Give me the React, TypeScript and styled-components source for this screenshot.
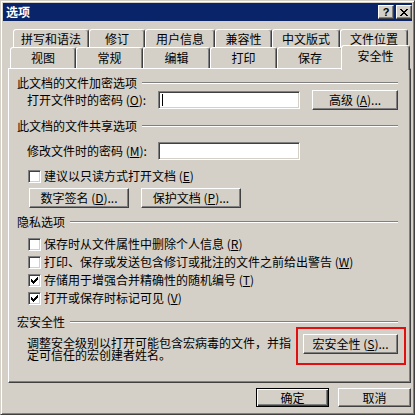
import React from "react";
import styled, { createGlobalStyle, css } from "styled-components";

const FACE = "#d4d0c8";

const GlobalStyle = createGlobalStyle`
  html, body { margin: 0; padding: 0; background: ${FACE}; }
  body {
    font-family: "Noto Sans CJK SC", "Noto Sans", sans-serif;
    font-size: 12px;
    color: #000;
  }
  *, *::before, *::after { box-sizing: border-box; }
`;

const raised = css`
  border: 1px solid;
  border-color: #fff #404040 #404040 #fff;
  box-shadow: inset -1px -1px 0 #808080;
`;

const sunken = css`
  border: 1px solid;
  border-color: #808080 #fff #fff #808080;
  box-shadow: inset 1px 1px 0 #404040, inset -1px -1px 0 ${FACE};
`;

const Window = styled.div`
  width: 415px;
  height: 415px;
  background: ${FACE};
  border: 1px solid;
  border-color: ${FACE} #404040 #404040 ${FACE};
  box-shadow: inset 1px 1px 0 #fff, inset -1px -1px 0 #808080;
  padding: 2px;
  display: flex;
  flex-direction: column;
  overflow: hidden;
`;

const TitleBar = styled.div`
  height: 18px;
  flex: none;
  background: #0a246a;
  display: flex;
  align-items: center;
  padding: 0 0 0 3px;
`;

const Title = styled.div`
  flex: 1;
  color: #fff;
  font-weight: bold;
  font-size: 12px;
  line-height: 18px;
`;

const CaptionButton = styled.div<{ $gap?: number }>`
  width: 16px;
  height: 14px;
  margin-left: ${(p) => p.$gap ?? 0}px;
  background: ${FACE};
  ${raised};
  display: flex;
  align-items: center;
  justify-content: center;
  font: bold 11px/1 "Liberation Sans", sans-serif;
  color: #000;
`;

const Body = styled.div`
  flex: 1;
  display: flex;
  flex-direction: column;
  padding: 8px 1px 0 5px;
`;

const TabRow = styled.div<{ $h: number; $indent: number }>`
  display: flex;
  height: ${(p) => p.$h}px;
  padding-left: ${(p) => p.$indent}px;
`;

const Tab = styled.div<{ $w: number; $active?: boolean }>`
  width: ${(p) => p.$w}px;
  height: 100%;
  flex: none;
  display: flex;
  align-items: center;
  justify-content: center;
  background: ${FACE};
  border-style: solid;
  border-width: 1px 1px 0 1px;
  border-color: #fff #404040 transparent #fff;
  box-shadow: inset -1px 0 0 #808080;
  border-radius: 3px 3px 0 0;
  line-height: 1;
  white-space: nowrap;
  ${(p) =>
    p.$active &&
    css`
      position: relative;
      z-index: 1;
      width: ${p.$w + 4}px;
      height: calc(100% + 4px);
      margin: -2px -2px -2px -2px;
      padding-bottom: 4px;
    `}
`;

const Panel = styled.div`
  width: 403px;
  height: 315px;
  flex: none;
  ${raised};
  display: flex;
  flex-direction: column;
  padding: 7px 12px 0 8px;
`;

const Header = styled.div<{ $mt?: number }>`
  display: flex;
  align-items: center;
  height: 14px;
  margin-top: ${(p) => p.$mt ?? 0}px;
  line-height: 14px;
  white-space: nowrap;
`;

const Rule = styled.div`
  flex: 1;
  height: 2px;
  margin-left: 5px;
  border-top: 1px solid #808080;
  border-bottom: 1px solid #fff;
`;

const Row = styled.div<{ $mt?: number; $h: number; $indent: number }>`
  display: flex;
  align-items: center;
  height: ${(p) => p.$h}px;
  margin-top: ${(p) => p.$mt ?? 0}px;
  padding-left: ${(p) => p.$indent}px;
  white-space: nowrap;
`;

const FieldLabel = styled.div`
  width: 131px;
  flex: none;
  line-height: 14px;
`;

const Input = styled.div`
  width: 142px;
  height: 18px;
  flex: none;
  background: #fff;
  ${sunken};
  display: flex;
  align-items: center;
  padding-left: 3px;
`;

const Caret = styled.span`
  width: 1px;
  height: 12px;
  background: #000;
`;

const Button = styled.div<{ $w: number; $h?: number; $ml?: number; $default?: boolean }>`
  width: ${(p) => p.$w}px;
  height: ${(p) => p.$h ?? 20}px;
  margin-left: ${(p) => p.$ml ?? 0}px;
  flex: none;
  background: ${FACE};
  ${raised};
  display: flex;
  align-items: center;
  justify-content: center;
  line-height: 1;
  white-space: nowrap;
  ${(p) =>
    p.$default &&
    css`
      border: 1px solid #000;
      box-shadow: inset 1px 1px 0 #fff, inset -1px -1px 0 #404040,
        inset -2px -2px 0 #808080;
    `}
`;

const Box = styled.div`
  width: 13px;
  height: 13px;
  flex: none;
  background: #fff;
  ${sunken};
  display: flex;
  align-items: center;
  justify-content: center;
`;

const CheckText = styled.span`
  margin-left: 3px;
  line-height: 14px;
`;

const Accel = styled.u`
  text-decoration: underline;
`;

const MacroRow = styled.div`
  display: flex;
  align-items: flex-start;
  margin-top: 5px;
  padding-left: 10px;
`;

const Paragraph = styled.p`
  width: 266px;
  flex: none;
  margin: 3px 0 0 0;
  line-height: 12px;
`;

const Highlight = styled.div`
  position: relative;
  margin-left: 10px;
  &::after {
    content: "";
    position: absolute;
    inset: -7px -8px -11px -7px;
    border: 2px solid #e01010;
    pointer-events: none;
  }
`;

const Footer = styled.div`
  display: flex;
  justify-content: flex-end;
  gap: 9px;
  margin-top: 5px;
`;

const checkCols: [number, number][] = [
  [0, 2], [1, 3], [2, 4], [3, 3], [4, 2], [5, 1], [6, 0],
];

const CheckMark = () => (
  <svg width="7" height="7" viewBox="0 0 7 7" shapeRendering="crispEdges">
    {checkCols.map(([x, y]) => (
      <rect key={x} x={x} y={y} width="1" height="3" fill="#000" />
    ))}
  </svg>
);

const Checkbox: React.FC<{ checked?: boolean; children: React.ReactNode }> = ({
  checked,
  children,
}) => (
  <>
    <Box>{checked && <CheckMark />}</Box>
    <CheckText>{children}</CheckText>
  </>
);

const CloseGlyph = () => (
  <svg width="8" height="7" viewBox="0 0 8 7" shapeRendering="crispEdges">
    {[0, 1, 2, 3, 4, 5, 6].map((i) => (
      <React.Fragment key={i}>
        <rect x={i} y={i} width="2" height="1" fill="#000" />
        <rect x={6 - i} y={i} width="2" height="1" fill="#000" />
      </React.Fragment>
    ))}
  </svg>
);

const backTabs: [string, number][] = [
  ["拼写和语法", 76],
  ["修订", 56],
  ["用户信息", 70],
  ["兼容性", 57],
  ["中文版式", 68],
  ["文件位置", 68],
];

const frontTabs: [string, number][] = [
  ["视图", 66],
  ["常规", 67],
  ["编辑", 67],
  ["打印", 67],
  ["保存", 66],
];

export default function App() {
  return (
    <>
      <GlobalStyle />
      <Window>
        <TitleBar>
          <Title>选项</Title>
          <CaptionButton>?</CaptionButton>
          <CaptionButton $gap={2}>
            <CloseGlyph />
          </CaptionButton>
        </TitleBar>
        <Body>
          <TabRow $h={18} $indent={5}>
            {backTabs.map(([t, w]) => (
              <Tab key={t} $w={w}>
                {t}
              </Tab>
            ))}
          </TabRow>
          <TabRow $h={21} $indent={2}>
            {frontTabs.map(([t, w]) => (
              <Tab key={t} $w={w}>
                {t}
              </Tab>
            ))}
            <Tab $w={65} $active>
              安全性
            </Tab>
          </TabRow>
          <Panel>
            <Header>
              此文档的文件加密选项
              <Rule />
            </Header>
            <Row $h={20} $indent={10}>
              <FieldLabel>
                打开文件时的密码 (<Accel>O</Accel>):
              </FieldLabel>
              <Input>
                <Caret />
              </Input>
              <Button $w={86} $ml={12}>
                高级 (<Accel>A</Accel>)...
              </Button>
            </Row>
            <Header $mt={9}>
              此文档的文件共享选项
              <Rule />
            </Header>
            <Row $h={20} $mt={8} $indent={10}>
              <FieldLabel>
                修改文件时的密码 (<Accel>M</Accel>):
              </FieldLabel>
              <Input />
            </Row>
            <Row $h={16} $mt={7} $indent={11}>
              <Checkbox>
                建议以只读方式打开文档 (<Accel>E</Accel>)
              </Checkbox>
            </Row>
            <Row $h={20} $mt={4} $indent={12}>
              <Button $w={100}>
                数字签名 (<Accel>D</Accel>)...
              </Button>
              <Button $w={100} $ml={12}>
                保护文档 (<Accel>P</Accel>)...
              </Button>
            </Row>
            <Header $mt={7}>
              隐私选项
              <Rule />
            </Header>
            <Row $h={18} $mt={6} $indent={11}>
              <Checkbox>
                保存时从文件属性中删除个人信息 (<Accel>R</Accel>)
              </Checkbox>
            </Row>
            <Row $h={18} $indent={11}>
              <Checkbox>
                打印、保存或发送包含修订或批注的文件之前给出警告 (<Accel>W</Accel>)
              </Checkbox>
            </Row>
            <Row $h={18} $indent={11}>
              <Checkbox checked>
                存储用于增强合并精确性的随机编号 (<Accel>T</Accel>)
              </Checkbox>
            </Row>
            <Row $h={18} $indent={11}>
              <Checkbox checked>
                打开或保存时标记可见 (<Accel>V</Accel>)
              </Checkbox>
            </Row>
            <Header $mt={8}>
              宏安全性
              <Rule />
            </Header>
            <MacroRow>
              <Paragraph>
                调整安全级别以打开可能包含宏病毒的文件，并指定可信任的宏创建者姓名。
              </Paragraph>
              <Highlight>
                <Button $w={95}>
                  宏安全性 (<Accel>S</Accel>)...
                </Button>
              </Highlight>
            </MacroRow>
          </Panel>
          <Footer>
            <Button $w={73} $h={19} $default>
              确定
            </Button>
            <Button $w={73} $h={19}>
              取消
            </Button>
          </Footer>
        </Body>
      </Window>
    </>
  );
}
